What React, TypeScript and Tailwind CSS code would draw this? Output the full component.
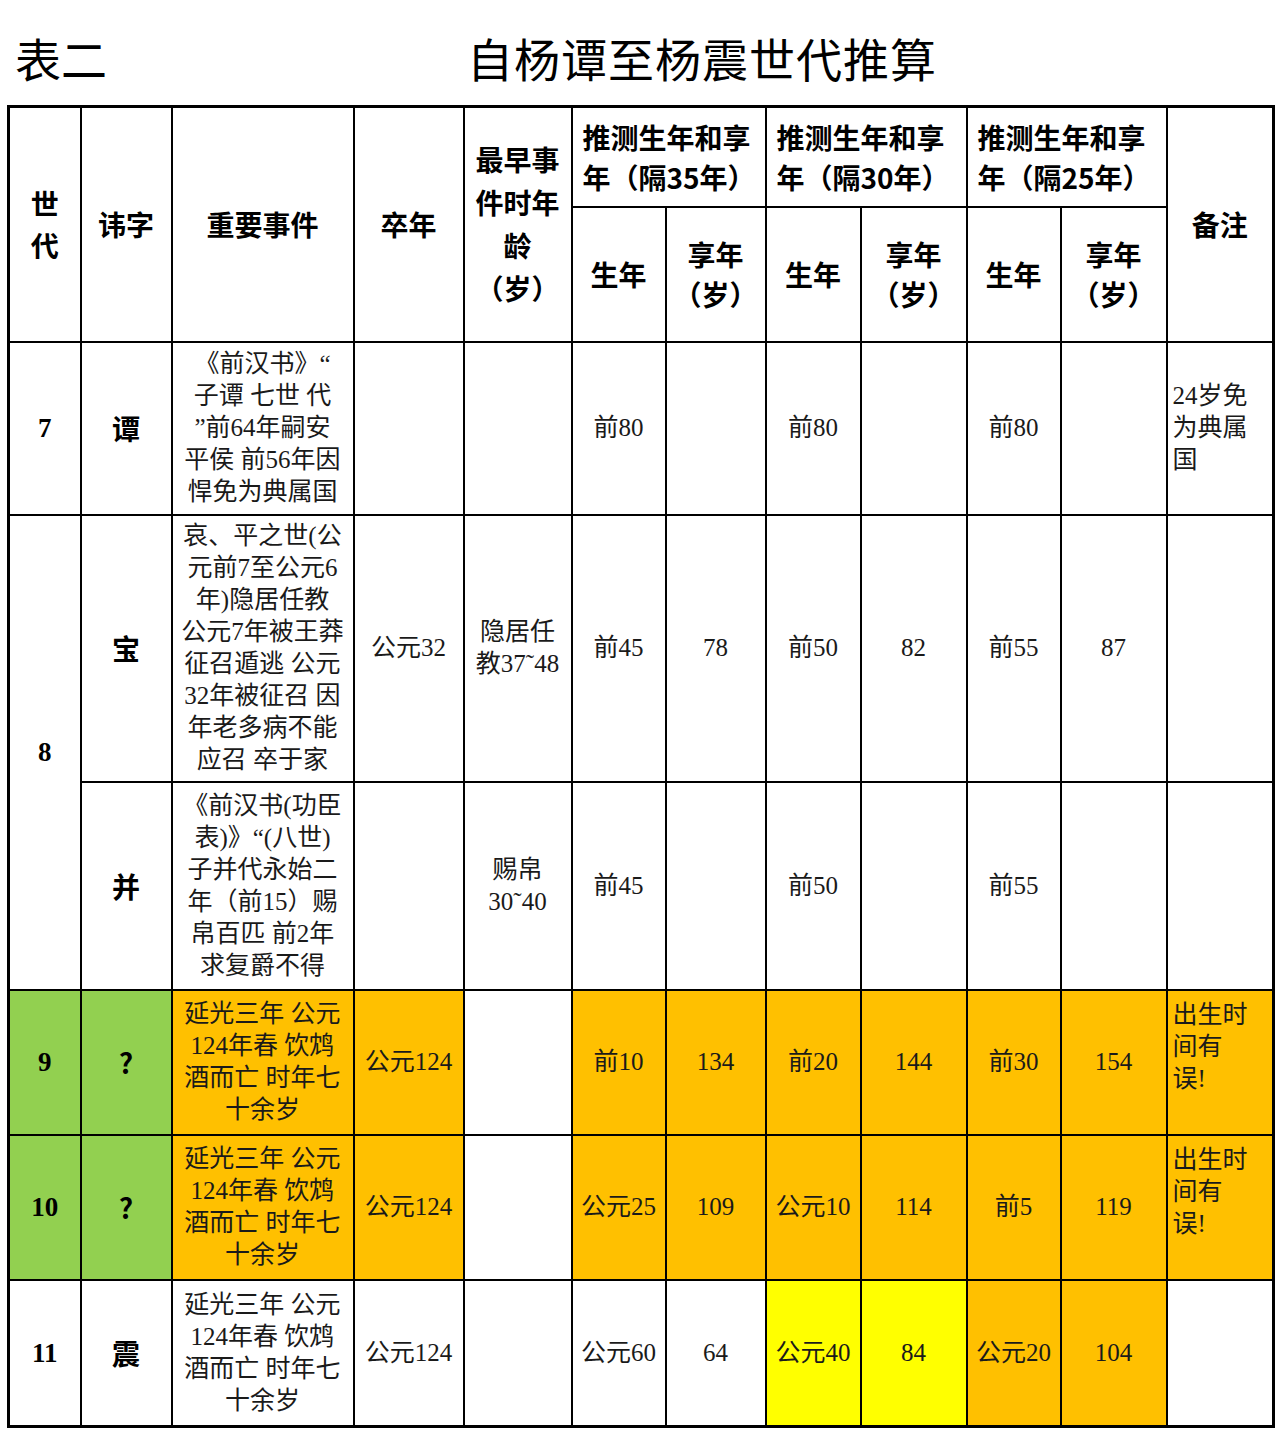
const body = { fontFamily: '"Liberation Serif", "Noto Sans CJK SC", serif' };
const head = { fontFamily: '"Noto Sans CJK SC", sans-serif' };

const widths = [72, 91, 182, 110, 108, 94, 100, 95, 106, 94, 106, 107];

const ORANGE = "bg-[#ffc000]";
const GREEN = "bg-[#92d050]";
const YELLOW = "bg-[#ffff00]";

const cell = "border-2 border-black text-center align-middle p-0";

function Lines({ lines }: { lines: string[] }) {
    return (
        <>
            {lines.map((l, i) => (
                <div key={i} className="whitespace-nowrap">{l}</div>
            ))}
        </>
    );
}

const yanguang = ["延光三年 公元", "124年春 饮鸩", "酒而亡 时年七", "十余岁"];

type Row = {
    gen?: string;
    genSpan?: number;
    name: string;
    events: string[];
    death: string;
    earliest: string[];
    vals: string[];
    note: string[];
    h: string;
    colors: string[];
};

const rows: Row[] = [
    {
        gen: "7",
        name: "谭",
        events: ["《前汉书》“", "子谭 七世 代", "”前64年嗣安", "平侯 前56年因", "悍免为典属国"],
        death: "",
        earliest: [],
        vals: ["前80", "", "前80", "", "前80", ""],
        note: ["24岁免", "为典属", "国"],
        h: "h-[173px]",
        colors: Array(12).fill(""),
    },
    {
        gen: "8",
        genSpan: 2,
        name: "宝",
        events: ["哀、平之世(公", "元前7至公元6", "年)隐居任教", "公元7年被王莽", "征召遁逃 公元", "32年被征召 因", "年老多病不能", "应召 卒于家"],
        death: "公元32",
        earliest: ["隐居任", "教37˜48"],
        vals: ["前45", "78", "前50", "82", "前55", "87"],
        note: [],
        h: "h-[267px]",
        colors: Array(12).fill(""),
    },
    {
        name: "并",
        events: ["《前汉书(功臣", "表)》“(八世)", "子并代永始二", "年（前15）赐", "帛百匹 前2年", "求复爵不得"],
        death: "",
        earliest: ["赐帛", "30˜40"],
        vals: ["前45", "", "前50", "", "前55", ""],
        note: [],
        h: "h-[208px]",
        colors: Array(12).fill(""),
    },
    {
        gen: "9",
        name: "?",
        events: yanguang,
        death: "公元124",
        earliest: [],
        vals: ["前10", "134", "前20", "144", "前30", "154"],
        note: ["出生时", "间有", "误!"],
        h: "h-[145px]",
        colors: [GREEN, GREEN, ORANGE, ORANGE, "", ORANGE, ORANGE, ORANGE, ORANGE, ORANGE, ORANGE, ORANGE],
    },
    {
        gen: "10",
        name: "?",
        events: yanguang,
        death: "公元124",
        earliest: [],
        vals: ["公元25", "109", "公元10", "114", "前5", "119"],
        note: ["出生时", "间有", "误!"],
        h: "h-[145px]",
        colors: [GREEN, GREEN, ORANGE, ORANGE, "", ORANGE, ORANGE, ORANGE, ORANGE, ORANGE, ORANGE, ORANGE],
    },
    {
        gen: "11",
        name: "震",
        events: yanguang,
        death: "公元124",
        earliest: [],
        vals: ["公元60", "64", "公元40", "84", "公元20", "104"],
        note: [],
        h: "h-[147px]",
        colors: ["", "", "", "", "", "", "", YELLOW, YELLOW, ORANGE, ORANGE, ""],
    },
];

export default function App() {
    return (
        <div className="w-[1276px] min-h-[1429px] bg-white text-black">
            <div className="h-[105px] flex items-center pt-[8px]" style={head}>
                <div className="pl-[15px] text-[46px] leading-none">表二</div>
                <div className="ml-[360px] text-[46px] leading-none tracking-[1px]">自杨谭至杨震世代推算</div>
            </div>
            <table className="ml-[7px] w-[1265px] table-fixed border-collapse border-[3px] border-black text-[25px] leading-[32px] text-[#1a1a1a]" style={body}>
                <colgroup>
                    {widths.map((w, i) => (
                        <col key={i} style={{ width: w }} />
                    ))}
                </colgroup>
                <thead style={head} className="font-bold text-[28px] text-black">
                    <tr className="h-[100px]">
                        <th rowSpan={2} className={cell}>
                            <div className="leading-[42px]">世<br />代</div>
                        </th>
                        <th rowSpan={2} className={cell}>讳字</th>
                        <th rowSpan={2} className={cell}>重要事件</th>
                        <th rowSpan={2} className={cell}>卒年</th>
                        <th rowSpan={2} className={cell}>
                            <div className="leading-[43px]">
                                <Lines lines={["最早事", "件时年", "龄", "（岁）"]} />
                            </div>
                        </th>
                        {["35", "30", "25"].map((n) => (
                            <th key={n} colSpan={2} className={`${cell} text-left pl-[10px] leading-[40px]`}>
                                <div className="whitespace-nowrap">推测生年和享</div>
                                <div className="whitespace-nowrap">年（隔{n}年）</div>
                            </th>
                        ))}
                        <th rowSpan={2} className={cell}>备注</th>
                    </tr>
                    <tr className="h-[135px]">
                        {[0, 1, 2].flatMap((i) => [
                            <th key={`a${i}`} className={cell}>生年</th>,
                            <th key={`b${i}`} className={`${cell} leading-[40px]`}>
                                享年<br />（岁）
                            </th>,
                        ])}
                    </tr>
                </thead>
                <tbody>
                    {rows.map((r, ri) => (
                        <tr key={ri} className={r.h}>
                            {r.gen !== undefined && (
                                <td rowSpan={r.genSpan ?? 1} className={`${cell} font-bold text-[27px] text-black ${r.colors[0]}`}>
                                    {r.gen}
                                </td>
                            )}
                            <td className={`${cell} font-bold text-[28px] text-black ${r.colors[1]}`} style={head}>
                                {r.name}
                            </td>
                            <td className={`${cell} px-[4px] ${r.colors[2]}`}>
                                <Lines lines={r.events} />
                            </td>
                            <td className={`${cell} ${r.colors[3]}`}>{r.death}</td>
                            <td className={`${cell} ${r.colors[4]}`}>
                                <Lines lines={r.earliest} />
                            </td>
                            {r.vals.map((v, vi) => (
                                <td key={vi} className={`${cell} ${r.colors[5 + vi]}`}>
                                    {v}
                                </td>
                            ))}
                            <td className={`${cell} text-left pl-[5px] ${r.note.length === 3 && ri > 0 ? "align-top pt-[8px]" : ""} ${r.colors[11]}`}>
                                <Lines lines={r.note} />
                            </td>
                        </tr>
                    ))}
                </tbody>
            </table>
        </div>
    );
}
